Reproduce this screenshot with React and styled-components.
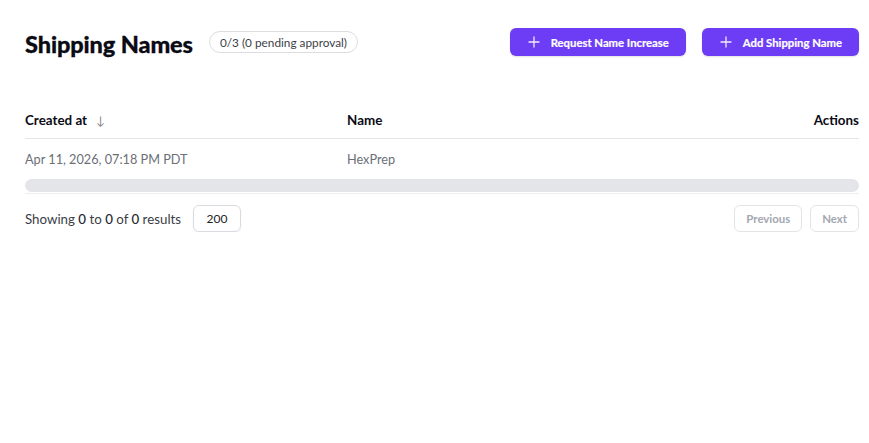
import React from 'react';
import styled, { createGlobalStyle } from 'styled-components';

const GlobalStyle = createGlobalStyle`
  body {
    margin: 0;
    background: #fff;
    font-family: Lato, "Noto Sans", sans-serif;
    color: #111;
  }
`;

const Page = styled.div`
  padding: 28px 10px 0 25px;
`;

const Header = styled.div`
  display: flex;
  align-items: center;
  justify-content: space-between;
  height: 28px;
`;

const TitleGroup = styled.div`
  display: flex;
  align-items: center;
  gap: 16px;
`;

const Title = styled.h1`
  margin: 0;
  font-size: 23.5px;
  font-weight: 900;
  color: #0b0b14;
  letter-spacing: -0.1px;
  padding-top: 4px;
  -webkit-text-stroke: 0.3px #0b0b14;
`;

const Badge = styled.span`
  display: inline-flex;
  align-items: center;
  height: 20px;
  padding: 0 10px;
  border: 1px solid #dcdde1;
  border-radius: 999px;
  font-size: 11.8px;
  color: #3c3f47;
`;

const Actions = styled.div`
  display: flex;
  gap: 16px;
`;

const PrimaryButton = styled.button`
  display: inline-flex;
  align-items: center;
  gap: 11px;
  height: 28px;
  padding: 0 17px 0 18px;
  border: none;
  border-radius: 6px;
  background: #6d3df5;
  color: #fff;
  font-family: inherit;
  font-size: 11.3px;
  font-weight: 700;
  -webkit-text-stroke: 0.2px #fff;
  box-shadow: 0 1px 2px rgba(0, 0, 0, 0.12);
  cursor: pointer;
`;

const Table = styled.div`
  margin-top: 45px;
`;

const HeadRow = styled.div`
  display: grid;
  grid-template-columns: 322px 1fr auto;
  align-items: center;
  height: 37px;
  border-bottom: 1px solid #e3e5e9;
  font-size: 13.4px;
  font-weight: 700;
  color: #0b0b14;
`;

const SortArrow = styled.span`
  margin-left: 9px;
  font-size: 12px;
  font-weight: 400;
  color: #888;
`;

const BodyRow = styled.div`
  display: grid;
  grid-template-columns: 322px 1fr auto;
  align-items: center;
  height: 40px;
  font-size: 12.7px;
  color: #6b6f78;
`;

const Scrollbar = styled.div`
  height: 13px;
  border-radius: 7px;
  background: #e4e5e8;
`;

const Divider = styled.div`
  height: 1px;
  margin-top: 1px;
  background: #eceef1;
`;

const Footer = styled.div`
  display: flex;
  align-items: center;
  justify-content: space-between;
  margin-top: 11px;
`;

const Showing = styled.div`
  display: flex;
  align-items: center;
  gap: 12px;
  font-size: 13.3px;
  color: #3a3d45;
  b {
    font-weight: 500;
    color: #22252c;
  }
`;

const PageSize = styled.div`
  display: inline-flex;
  align-items: center;
  justify-content: center;
  width: 46px;
  height: 25px;
  border: 1px solid #d9dbe0;
  border-radius: 6px;
  font-size: 12px;
  color: #222;
  box-shadow: 0 1px 2px rgba(0, 0, 0, 0.06);
`;

const Pager = styled.div`
  display: flex;
  gap: 8px;
`;

const PagerButton = styled.button`
  height: 27px;
  padding: 0 11px;
  border: 1px solid #e2e4e8;
  border-radius: 6px;
  background: #fff;
  color: #a3a7b0;
  font-family: inherit;
  font-size: 11.4px;
  font-weight: 700;
`;

const PlusIcon = () => (
  <svg width="12" height="12" viewBox="0 0 12 12" fill="none" stroke="#fff" strokeWidth="1.3" strokeLinecap="round" opacity="0.9">
    <path d="M6 1v10M1 6h10" />
  </svg>
);

export default function App() {
  return (
    <Page>
      <GlobalStyle />
      <Header>
        <TitleGroup>
          <Title>Shipping Names</Title>
          <Badge>0/3 (0 pending approval)</Badge>
        </TitleGroup>
        <Actions>
          <PrimaryButton>
            <PlusIcon />
            Request Name Increase
          </PrimaryButton>
          <PrimaryButton>
            <PlusIcon />
            Add Shipping Name
          </PrimaryButton>
        </Actions>
      </Header>

      <Table>
        <HeadRow>
          <span>
            Created at<SortArrow>↓</SortArrow>
          </span>
          <span>Name</span>
          <span>Actions</span>
        </HeadRow>
        <BodyRow>
          <span>Apr 11, 2026, 07:18 PM PDT</span>
          <span>HexPrep</span>
          <span />
        </BodyRow>
        <Scrollbar />
        <Divider />
      </Table>

      <Footer>
        <Showing>
          <span>
            Showing <b>0</b> to <b>0</b> of <b>0</b> results
          </span>
          <PageSize>200</PageSize>
        </Showing>
        <Pager>
          <PagerButton>Previous</PagerButton>
          <PagerButton>Next</PagerButton>
        </Pager>
      </Footer>
    </Page>
  );
}
